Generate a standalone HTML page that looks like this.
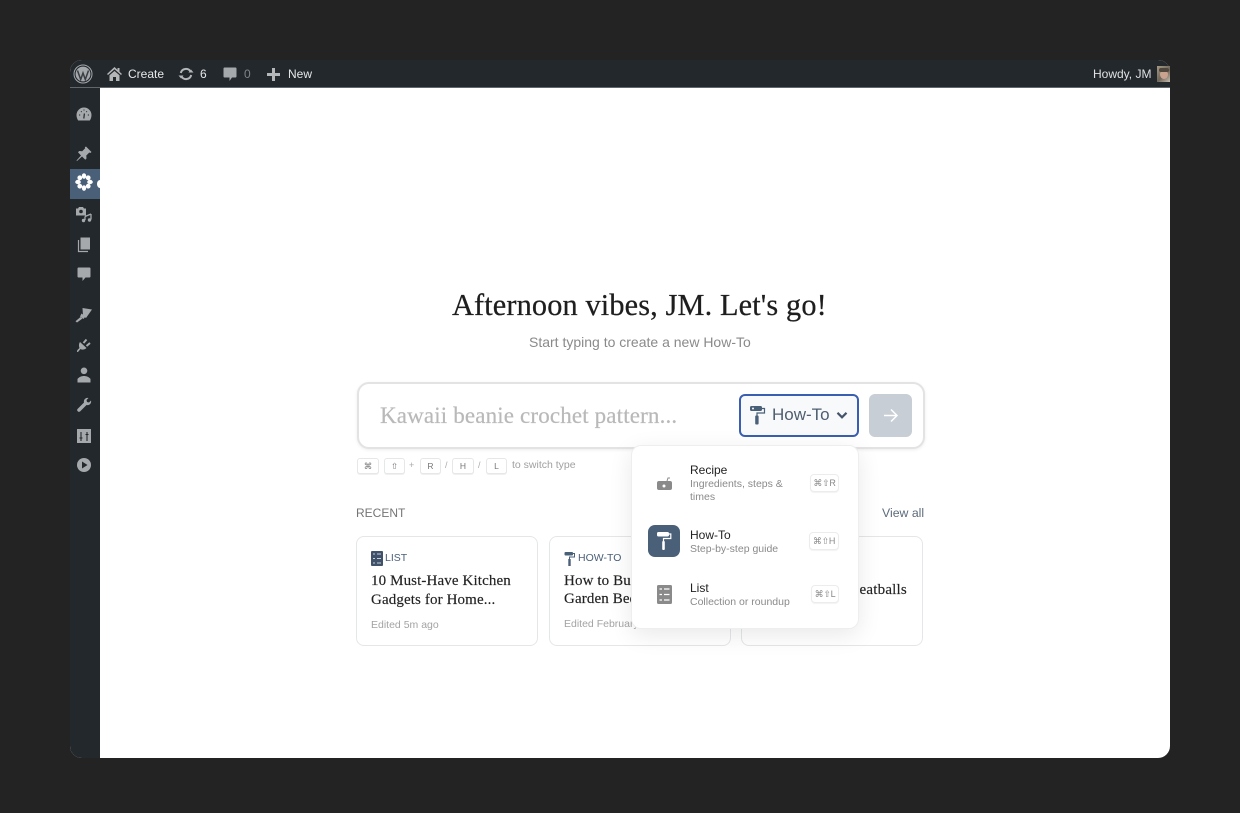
<!DOCTYPE html>
<html><head><meta charset="utf-8"><title>Create</title>
<style>
*{box-sizing:border-box}
html,body{margin:0;padding:0;width:1240px;height:813px;overflow:hidden;background:#232323;font-family:"Liberation Sans",sans-serif}
.t{position:absolute;white-space:nowrap;line-height:1}
.s{font-family:"Liberation Serif",serif}
svg{position:absolute;display:block}
#win{position:absolute;left:70px;top:60px;width:1100px;height:698px;border-radius:12px;overflow:hidden;background:#fff}
#bar{position:absolute;left:0;top:0;width:1100px;height:28px;background:#23282d;border-bottom:1px solid #62676b}
#side{position:absolute;left:0;top:28px;width:30px;height:670px;background:#23282d}
.card{position:absolute;top:536px;height:110px;background:#fff;border:1px solid #e4e6e8;border-radius:8px}
.kbd{position:absolute;height:16px;border:1px solid #e6e7e8;border-radius:3px;background:#fff;color:#777;font-size:8.5px;line-height:14px;text-align:center;box-shadow:0 1px 0 #f0f0f0}
.k2{position:absolute;height:18px;border:1px solid #ececec;border-radius:4px;background:#fff;color:#888;font-size:9px;line-height:16px;text-align:center;box-shadow:0 1px 1px #f2f2f2;letter-spacing:-.3px}
</style></head><body>
<div id="win">
<div id="bar"></div>
<div id="side"></div>
</div>

<!-- active menu -->
<div style="position:absolute;left:70px;top:169px;width:30px;height:30px;background:#4a5f78"></div>
<div style="position:absolute;left:97px;top:180px;width:6px;height:8px;background:#fff;border-radius:50%"></div>

<!-- admin bar icons -->
<svg style="left:73px;top:64px" width="20" height="20" viewBox="0 0 20 20"><circle cx="10" cy="10" r="9" fill="none" stroke="#a5a9ac" stroke-width="1"/><circle cx="10" cy="10" r="7.400" fill="#a5a9ac"/><path d="M4.500 6.500l3.200 9 2.300-6.500 2.300 6.500 3.200-9" fill="none" stroke="#3a3f44" stroke-width="1.500"/></svg>
<svg style="left:106px;top:66px" width="17" height="16" viewBox="0 0 17 16"><path d="M8.500 1L1 8l1 1 6.500-5.800L15 9l1-1-2.500-2.300V2h-2v1.900z" fill="#b4b6b8"/><path d="M3.500 9.200L8.500 5l5 4.200V15H10v-4H7v4H3.500z" fill="#b4b6b8"/></svg>
<div class="t" style="left:128px;top:68px;font-size:12px;color:#e6e7e8">Create</div>
<svg style="left:178px;top:66px" width="16" height="16" viewBox="0 0 16 16"><path d="M2.800 7a5.300 5.300 0 0 1 9.700-1.500M13.200 9a5.300 5.300 0 0 1-9.700 1.500" fill="none" stroke="#b4b6b8" stroke-width="2"/><path d="M10.500 6.500h5L13 3.500zM5.500 9.500h-5L3 12.500z" fill="#b4b6b8"/></svg>
<div class="t" style="left:200px;top:68px;font-size:12px;color:#e6e7e8;font-weight:400">6</div>
<svg style="left:223px;top:67px" width="14" height="15" viewBox="0 0 14 15"><path d="M1.500 0.500h11a1 1 0 0 1 1 1v8a1 1 0 0 1-1 1H9l-2.500 3.500v-3.500h-5a1 1 0 0 1-1-1v-8a1 1 0 0 1 1-1z" fill="#a5a9ac"/></svg>
<div class="t" style="left:244px;top:68px;font-size:12px;color:#80858a">0</div>
<svg style="left:267px;top:68px" width="13" height="13" viewBox="0 0 13 13"><path d="M5 0h3v5h5v3H8v5H5V8H0V5h5z" fill="#b4b6b8"/></svg>
<div class="t" style="left:288px;top:68px;font-size:12px;color:#e6e7e8">New</div>
<div class="t" style="left:1093px;top:68px;font-size:12px;color:#e0e1e2">Howdy, JM</div>
<div style="position:absolute;left:1157px;top:66px;width:13px;height:16px;background:linear-gradient(135deg,#a49a85,#6f6659 55%,#c7bcae);overflow:hidden"><div style="position:absolute;left:3px;top:4px;width:8px;height:9px;border-radius:50%;background:#c9a390"></div><div style="position:absolute;left:2px;top:2px;width:10px;height:4px;border-radius:3px;background:#4f463d"></div></div>

<!-- side icons -->
<svg style="left:76px;top:107px" width="16" height="14" viewBox="0 0 16 14"><path d="M8 .5a7.500 7.500 0 0 1 7.500 7.500c0 2-.6 3.800-1.700 5.500H2.200C1.100 11.800.5 10 .5 8A7.500 7.500 0 0 1 8 .5z" fill="#a5a9ac"/><path d="M7.800 11.500l.6-5" stroke="#23282d" stroke-width="1.200"/><path d="M3 8h1.200M11.800 8H13M5 4.300l.7.700M11 4.300l-.7.700M8 2.500v1" stroke="#23282d" stroke-width="1"/></svg>
<svg style="left:76px;top:146px" width="16" height="16" viewBox="0 0 16 16"><path d="M10 .5L15.500 6l-1.200 1-1-.5-3 3 .2 3-1.200 1.200L6 10.500 1 15l-.5-.5L5 9.500 2 6.200 3.200 5l3 .2 3-3-.4-1z" fill="#a5a9ac"/></svg>
<svg style="left:75px;top:173px" width="18" height="18" viewBox="0 0 18 18"><g fill="#fff"><ellipse cx="9" cy="3" rx="2.200" ry="2.800"/><ellipse cx="9" cy="15" rx="2.200" ry="2.800"/><ellipse cx="3" cy="9" rx="2.800" ry="2.200"/><ellipse cx="15" cy="9" rx="2.800" ry="2.200"/><circle cx="4.800" cy="4.800" r="2.400"/><circle cx="13.200" cy="4.800" r="2.400"/><circle cx="4.800" cy="13.200" r="2.400"/><circle cx="13.200" cy="13.200" r="2.400"/></g></svg>
<svg style="left:75px;top:206px" width="18" height="18" viewBox="0 0 18 18"><path d="M1 2.500h2l1-1.500h4l1 1.500h2v7H1z" fill="#a5a9ac"/><circle cx="6" cy="5.500" r="1.800" fill="#23282d"/><path d="M10 10.500v3.500M16 8v5.500M10 10.500l6-2.500" stroke="#a5a9ac" stroke-width="1.300" fill="none"/><circle cx="8.500" cy="14.500" r="1.700" fill="#a5a9ac"/><circle cx="14.500" cy="14" r="1.700" fill="#a5a9ac"/></svg>
<svg style="left:77px;top:237px" width="14" height="16" viewBox="0 0 14 16"><path d="M3.500 .5H13v12H3.500z" fill="#a5a9ac"/><path d="M1.500 3v11.500H11" stroke="#a5a9ac" stroke-width="1.200" fill="none"/></svg>
<svg style="left:77px;top:267px" width="14" height="15" viewBox="0 0 14 15"><path d="M1.500.5h11a1 1 0 0 1 1 1v8a1 1 0 0 1-1 1H8.500L5.500 14v-3.500h-4a1 1 0 0 1-1-1v-8a1 1 0 0 1 1-1z" fill="#a5a9ac"/></svg>
<svg style="left:75px;top:307px" width="17" height="16" viewBox="0 0 17 16"><path d="M7.500 1L17 2.500 11 11 8 9z" fill="#a5a9ac"/><path d="M6.500 6.500l4 3-2 2.500-3.500-2.500z" fill="#a5a9ac"/><path d="M5.500 10l2 1.500-5.500 4-1.500-1.200z" fill="#a5a9ac"/></svg>
<svg style="left:76px;top:337px" width="16" height="16" viewBox="0 0 16 16"><path d="M4 5l6.500 6c-2 1.800-4.500 2-6 1L2 15H1l.2-1.800L3.500 11C2.700 9 2.800 6.500 4 5z" fill="#a5a9ac"/><path d="M7.500 6l3-3.500M10.500 9l3.500-3" stroke="#a5a9ac" stroke-width="2"/></svg>
<svg style="left:77px;top:367px" width="14" height="16" viewBox="0 0 14 16"><circle cx="7" cy="3.800" r="3.300" fill="#a5a9ac"/><path d="M0.500 15.500v-3.500C2 10 4.500 9 7 9s5 1 6.500 3v3.500z" fill="#a5a9ac"/></svg>
<svg style="left:76px;top:397px" width="16" height="16" viewBox="0 0 16 16"><path d="M15 3.500c.5 2-.5 4-2.500 4.500-.8.200-1.500.100-2 0L4 14.500a1.800 1.800 0 0 1-2.500-2.500L8 5.500c-.2-.6-.2-1.300 0-2C8.600 1.500 10.500.5 12.500 1L10.500 3l.5 2 2 .5z" fill="#a5a9ac"/></svg>
<svg style="left:77px;top:429px" width="14" height="14" viewBox="0 0 14 14"><path d="M0 0h14v14H0z" fill="#a5a9ac"/><path d="M4 3v9M10 3v9M2.500 9h3M8.500 5.500h3" stroke="#23282d" stroke-width="1.100"/></svg>
<svg style="left:77px;top:458px" width="14" height="14" viewBox="0 0 14 14"><circle cx="7" cy="7" r="7" fill="#a5a9ac"/><path d="M5 3.500L10.500 7 5 10.500z" fill="#23282d"/></svg>

<!-- heading -->
<div class="t s" id="h" style="left:452px;top:290px;font-size:30.300px;color:#1e1e1e;letter-spacing:.14px;-webkit-text-stroke:.25px #1e1e1e">Afternoon vibes, JM. Let's go!</div>
<div class="t" style="left:529px;top:335px;font-size:14px;color:#8a8a8a">Start typing to create a new How-To</div>

<!-- input -->
<div style="position:absolute;left:356.500px;top:381.500px;width:568px;height:67px;background:#fff;border:2px solid #e3e3e3;border-radius:12px;box-shadow:0 1px 3px rgba(0,0,0,.08)"></div>
<div class="t s" style="left:380px;top:404px;font-size:23px;color:#b9b9b9;letter-spacing:.15px;-webkit-text-stroke:.2px #b9b9b9">Kawaii beanie crochet pattern...</div>
<div style="position:absolute;left:739px;top:394px;width:120px;height:43px;background:#f8f9fa;border:2px solid #3a5fb0;border-radius:6px"></div>
<svg style="left:749px;top:405px" width="17" height="20" viewBox="0 0 17 20"><rect x="1" y="1" width="12" height="5" rx="1.500" fill="#4a5f78"/><circle cx="4" cy="3.500" r="1" fill="#f8f9fa"/><path d="M13 3.500h2.500V8H8v3" stroke="#4a5f78" stroke-width="1.200" fill="none"/><rect x="6.200" y="10.500" width="3.400" height="9" rx="1" fill="#4a5f78"/></svg>
<div class="t" style="left:772px;top:406px;font-size:17px;color:#4e5e70">How-To</div>
<svg style="left:836px;top:411px" width="12" height="9" viewBox="0 0 12 9"><path d="M1.500 1.800L6 6.300l4.500-4.500" fill="none" stroke="#44546a" stroke-width="2.200"/></svg>
<div style="position:absolute;left:869px;top:394px;width:43px;height:43px;background:#c8ced5;border-radius:6px"></div>
<svg style="left:882px;top:407px" width="17" height="17" viewBox="0 0 17 17"><path d="M2 8.500h12.500M9 2.500l6 6-6 6" fill="none" stroke="#fff" stroke-width="1.500"/></svg>

<!-- hints -->
<div class="kbd" style="left:357px;top:458px;width:22px">⌘</div>
<div class="kbd" style="left:384px;top:458px;width:21px">⇧</div>
<div class="t" style="left:409px;top:461px;font-size:9px;color:#aaa">+</div>
<div class="kbd" style="left:420px;top:458px;width:21px">R</div>
<div class="t" style="left:445px;top:461px;font-size:9px;color:#aaa">/</div>
<div class="kbd" style="left:452px;top:458px;width:22px">H</div>
<div class="t" style="left:478px;top:461px;font-size:9px;color:#aaa">/</div>
<div class="kbd" style="left:486px;top:458px;width:21px">L</div>
<div class="t" style="left:512px;top:460px;font-size:10.500px;color:#a0a0a0">to switch type</div>

<div class="t" style="left:356px;top:507px;font-size:12px;color:#757575">RECENT</div>
<div class="t" style="left:882px;top:507px;font-size:12.300px;color:#5c6b7c">View all</div>

<!-- cards -->
<div class="card" style="left:356px;width:182px"></div>
<div class="card" style="left:549px;width:182px"></div>
<div class="card" style="left:741px;width:182px"></div>

<svg style="left:371px;top:551px" width="12" height="15" viewBox="0 0 12 15"><rect width="12" height="15" rx="1" fill="#3f5269"/><path d="M2 3h2M6 3h4M2 7.500h2M6 7.500h4M2 12h2M6 12h4" stroke="#c8d0d8" stroke-width="1.100"/></svg>
<div class="t" style="left:385px;top:553px;font-size:10.500px;color:#4a5f78">LIST</div>
<div class="t s" style="left:371px;top:574px;font-size:15px;color:#222;letter-spacing:.12px;-webkit-text-stroke:.15px #222">10 Must-Have Kitchen</div>
<div class="t s" style="left:371px;top:593px;font-size:15px;color:#222;letter-spacing:.12px;-webkit-text-stroke:.15px #222">Gadgets for Home...</div>
<div class="t" style="left:371px;top:620px;font-size:10.500px;color:#a3a3a3">Edited 5m ago</div>

<svg style="left:564px;top:551px" width="11" height="15" viewBox="0 0 11 15"><rect x=".5" y="1" width="8.500" height="3.500" rx="1" fill="#4a5f78"/><path d="M9 2.500h1.500V6H5.500v3" stroke="#4a5f78" stroke-width="1" fill="none"/><rect x="4.300" y="8" width="2.400" height="7" fill="#4a5f78"/></svg>
<div class="t" style="left:578px;top:553px;font-size:10.500px;color:#4a5f78">HOW-TO</div>
<div class="t s" style="left:564px;top:574px;font-size:15px;color:#222;letter-spacing:.12px;-webkit-text-stroke:.15px #222">How to Build</div>
<div class="t s" style="left:564px;top:592px;font-size:15px;color:#222;letter-spacing:.12px;-webkit-text-stroke:.15px #222">Garden Beds</div>
<div class="t" style="left:564px;top:619px;font-size:10.500px;color:#a3a3a3">Edited February</div>

<div class="t s" style="left:846px;top:583px;font-size:15px;color:#222;letter-spacing:.2px;-webkit-text-stroke:.15px #222">Meatballs</div>

<!-- dropdown -->
<div style="position:absolute;left:631px;top:445px;width:228px;height:184px;background:#fff;border-radius:10px;border:1px solid #eee;box-shadow:0 6px 24px rgba(0,0,0,.09)"></div>
<svg style="left:656px;top:476px" width="17" height="16" viewBox="0 0 17 16"><path d="M3 5h11a2 2 0 0 1 2 2v5a2 2 0 0 1-2 2H3a2 2 0 0 1-2-2V7a2 2 0 0 1 2-2z" fill="#8a8a8a"/><path d="M11 5l1-3h2" stroke="#8a8a8a" stroke-width="1" fill="none"/><circle cx="8" cy="10" r="1.500" fill="#fff"/></svg>
<div class="t" style="left:690px;top:464px;font-size:12px;color:#222">Recipe</div>
<div class="t" style="left:690px;top:479px;font-size:10.500px;color:#8a8a8a">Ingredients, steps &amp;</div>
<div class="t" style="left:690px;top:492px;font-size:10.500px;color:#8a8a8a">times</div>
<div class="k2" style="left:810px;top:474px;width:29px">⌘⇧R</div>

<div style="position:absolute;left:648px;top:525px;width:32px;height:32px;background:#4a5f78;border-radius:7px"></div>
<svg style="left:656px;top:531px" width="16" height="20" viewBox="0 0 16 20"><rect x="1" y="1" width="12" height="4.500" rx="1.500" fill="#fff"/><path d="M13 3h1.800v4.500H7.500V10" stroke="#fff" stroke-width="1.200" fill="none"/><rect x="6.200" y="10" width="2.600" height="9" rx="1" fill="#fff"/></svg>
<div class="t" style="left:690px;top:529px;font-size:12px;color:#222">How-To</div>
<div class="t" style="left:690px;top:544px;font-size:10.500px;color:#8a8a8a">Step-by-step guide</div>
<div class="k2" style="left:809px;top:532px;width:30px">⌘⇧H</div>

<svg style="left:657px;top:585px" width="15" height="19" viewBox="0 0 15 19"><rect width="15" height="19" rx="1.500" fill="#8a8a8a"/><path d="M2.500 4h2.500M7 4h5.500M2.500 9.500h2.500M7 9.500h5.500M2.500 15h2.500M7 15h5.500" stroke="#fff" stroke-width="1.200"/></svg>
<div class="t" style="left:690px;top:582px;font-size:12px;color:#222">List</div>
<div class="t" style="left:690px;top:597px;font-size:10.500px;color:#8a8a8a">Collection or roundup</div>
<div class="k2" style="left:811px;top:585px;width:28px">⌘⇧L</div>
</body></html>
